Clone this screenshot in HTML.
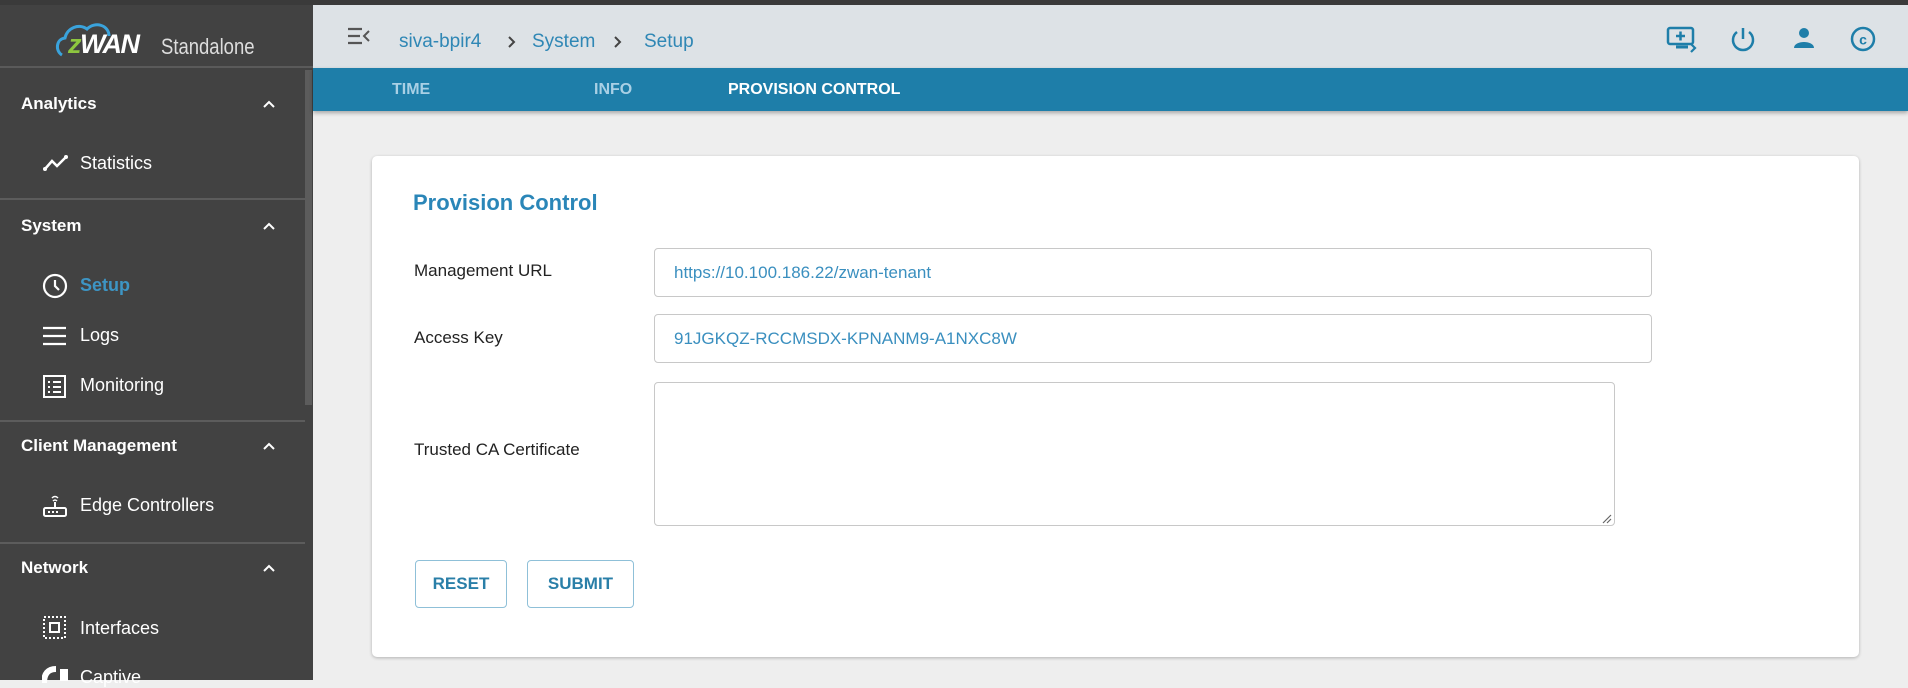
<!DOCTYPE html>
<html><head><meta charset="utf-8"><style>
*{box-sizing:border-box;margin:0;padding:0}
body{width:1908px;height:680px;overflow:hidden;background:#eeeeee;font-family:"Liberation Sans",sans-serif;position:relative}
.topbar{position:absolute;left:0;top:0;width:1908px;height:5px;background:#3a3a3a}
.side{position:absolute;left:0;top:5px;width:313px;height:675px;background:#424242;color:#fff}
.logo{height:63px;border-bottom:2px solid #5a5a5a;position:relative}
.scroll{position:absolute;left:305px;top:65px;width:7px;height:335px;background:#5c5c5c}
.sec{position:absolute;left:21px;font-weight:bold;font-size:17px;color:#fff}
.chev{position:absolute;left:262px;width:14px;height:14px}
.item{position:absolute;left:80px;font-size:18px;color:#fff}
.ico{position:absolute;left:42px}
.div{position:absolute;left:0;width:305px;height:2px;background:#5c5c5c}
.hdr{position:absolute;left:313px;top:5px;width:1595px;height:63px;background:#dde2e6}
.crumb{position:absolute;top:26px;font-size:19px;color:#2f87b5}
.sep{position:absolute;top:30px}
.tabs{position:absolute;left:313px;top:68px;width:1595px;height:43px;background:#1e7ea9;box-shadow:0 2px 4px rgba(0,0,0,.3)}
.tab{position:absolute;top:13px;font-size:16px;font-weight:bold;color:#a9d0e5}
.card{position:absolute;left:372px;top:156px;width:1487px;height:501px;background:#fff;border-radius:5px;box-shadow:0 1px 3px rgba(0,0,0,.25)}
.title{position:absolute;left:41px;top:34px;font-size:22px;font-weight:bold;color:#2a86b8}
.lbl{position:absolute;left:42px;font-size:17px;color:#222}
.inp{position:absolute;left:282px;width:998px;height:49px;border:1px solid #c8c8c8;border-radius:4px;font-size:17px;color:#3a8fbf;padding:14px 19px}
.btn{position:absolute;top:404px;height:48px;border:1px solid #8fc0d8;border-radius:4px;font-size:17px;font-weight:bold;color:#2a7fa8;text-align:center;line-height:46px}
</style></head><body>
<div class="topbar"></div>
<div class="side">
 <div class="logo">
  <svg style="position:absolute;left:55px;top:14px" width="60" height="40" viewBox="0 0 60 40"><path d="M7 36 C0 32 1 20 10 19 C12 9 24 4 32 10 C40 2 54 6 54 17" fill="none" stroke="#3aa3dc" stroke-width="3"/></svg>
  <div style="position:absolute;left:68px;top:24px;font-size:27px;font-weight:bold;font-style:italic;letter-spacing:-1.5px;color:#fff"><span style="color:#8dc63f">z</span>WAN</div>
  <div style="position:absolute;left:161px;top:29px;font-size:22px;color:#ddd;transform:scaleX(0.84);transform-origin:left">Standalone</div>
 </div>
 <div class="scroll"></div>
 <div class="sec" style="top:89px">Analytics</div>
 <svg class="chev" style="top:92px" viewBox="0 0 14 14"><path d="M2 10 L7 5 L12 10" fill="none" stroke="#fff" stroke-width="2"/></svg>
 <svg class="ico" style="top:146px" width="28" height="24" viewBox="0 0 28 24"><path d="M3 18 L10 10 L15 15 L24 6" fill="none" stroke="#fff" stroke-width="2.5"/><circle cx="3" cy="18" r="2" fill="#fff"/><circle cx="24" cy="6" r="2" fill="#fff"/></svg>
 <div class="item" style="top:148px">Statistics</div>
 <div class="div" style="top:193px"></div>
 <div class="sec" style="top:211px">System</div>
 <svg class="chev" style="top:214px" viewBox="0 0 14 14"><path d="M2 10 L7 5 L12 10" fill="none" stroke="#fff" stroke-width="2"/></svg>
 <svg class="ico" style="top:268px" width="26" height="26" viewBox="0 0 26 26"><circle cx="13" cy="13" r="11" fill="none" stroke="#fff" stroke-width="2.2"/><path d="M13 7 V13 L17 17" fill="none" stroke="#fff" stroke-width="2.2"/></svg>
 <div class="item" style="top:270px;color:#3d95c4;font-weight:bold">Setup</div>
 <svg class="ico" style="top:320px" width="26" height="22" viewBox="0 0 26 22"><path d="M1 3H24M1 11H24M1 19H24" stroke="#fff" stroke-width="2.2"/></svg>
 <div class="item" style="top:320px">Logs</div>
 <svg class="ico" style="top:369px" width="26" height="26" viewBox="0 0 26 26"><rect x="2" y="2" width="21" height="21" fill="none" stroke="#fff" stroke-width="2"/><path d="M6 8h2M11 8h8M6 13h2M11 13h8M6 18h2M11 18h8" stroke="#fff" stroke-width="2"/></svg>
 <div class="item" style="top:370px">Monitoring</div>
 <div class="div" style="top:415px"></div>
 <div class="sec" style="top:431px">Client Management</div>
 <svg class="chev" style="top:434px" viewBox="0 0 14 14"><path d="M2 10 L7 5 L12 10" fill="none" stroke="#fff" stroke-width="2"/></svg>
 <svg class="ico" style="top:488px" width="26" height="26" viewBox="0 0 26 26"><path d="M10 5 Q13 2 16 5 M11 8 Q13 6 15 8" fill="none" stroke="#fff" stroke-width="1.5"/><path d="M13 9V15" stroke="#fff" stroke-width="2"/><rect x="2" y="15" width="22" height="8" rx="1.5" fill="none" stroke="#fff" stroke-width="2"/><path d="M6 19h2M10 19h2M14 19h2" stroke="#fff" stroke-width="2"/></svg>
 <div class="item" style="top:490px">Edge Controllers</div>
 <div class="div" style="top:537px"></div>
 <div class="sec" style="top:553px">Network</div>
 <svg class="chev" style="top:556px" viewBox="0 0 14 14"><path d="M2 10 L7 5 L12 10" fill="none" stroke="#fff" stroke-width="2"/></svg>
 <svg class="ico" style="top:610px" width="26" height="26" viewBox="0 0 26 26"><rect x="2" y="2" width="21" height="21" fill="none" stroke="#fff" stroke-width="2" stroke-dasharray="2 2"/><rect x="8" y="8" width="9" height="9" fill="none" stroke="#fff" stroke-width="2"/></svg>
 <div class="item" style="top:613px">Interfaces</div>
 <svg class="ico" style="top:658px" width="30" height="20" viewBox="0 0 30 20"><path d="M2 20 Q2 6 14 6" fill="none" stroke="#fff" stroke-width="6"/><rect x="18" y="6" width="8" height="12" fill="#fff"/></svg>
 <div class="item" style="top:662px">Captive</div>
</div>
<div class="hdr">
 <svg style="position:absolute;left:34px;top:22px" width="24" height="18" viewBox="0 0 24 18"><path d="M1 2H15M1 9H13M1 16H15" stroke="#555" stroke-width="2.2"/><path d="M22 4 L17 9 L22 14" fill="none" stroke="#555" stroke-width="2"/></svg>
 <div class="crumb" style="left:86px">siva-bpir4</div>
 <svg class="sep" style="left:194px" width="10" height="14" viewBox="0 0 10 14"><path d="M2 2 L7 7 L2 12" fill="none" stroke="#444" stroke-width="2"/></svg>
 <div class="crumb" style="left:219px">System</div>
 <svg class="sep" style="left:300px" width="10" height="14" viewBox="0 0 10 14"><path d="M2 2 L7 7 L2 12" fill="none" stroke="#444" stroke-width="2"/></svg>
 <div class="crumb" style="left:331px">Setup</div>
 <svg style="position:absolute;left:1353px;top:20px" width="32" height="28" viewBox="0 0 32 28"><rect x="2" y="3" width="25" height="16" rx="2" fill="none" stroke="#1e7ea9" stroke-width="2.5"/><path d="M14.5 6.5V15.5M10 11H19" stroke="#1e7ea9" stroke-width="2.5"/><path d="M10 22H22" stroke="#1e7ea9" stroke-width="3"/><path d="M25 19 L29 23 L25 27" fill="none" stroke="#1e7ea9" stroke-width="2.2"/></svg>
 <svg style="position:absolute;left:1417px;top:20px" width="26" height="28" viewBox="0 0 26 28"><path d="M13 3V14" stroke="#1e7ea9" stroke-width="2.5"/><path d="M7 7 A10 10 0 1 0 19 7" fill="none" stroke="#1e7ea9" stroke-width="2.5"/></svg>
 <svg style="position:absolute;left:1479px;top:21px" width="24" height="24" viewBox="0 0 24 24"><circle cx="12" cy="7" r="5" fill="#1e7ea9"/><path d="M2 22 C2 14 22 14 22 22Z" fill="#1e7ea9"/></svg>
 <svg style="position:absolute;left:1537px;top:21px" width="28" height="28" viewBox="0 0 28 28"><circle cx="13" cy="13" r="11" fill="none" stroke="#1e7ea9" stroke-width="2.5"/><text x="13" y="18.5" text-anchor="middle" font-family="Liberation Sans" font-weight="bold" font-size="14" fill="#1e7ea9">c</text></svg>
</div>
<div class="tabs">
 <div class="tab" style="left:79px">TIME</div>
 <div class="tab" style="left:281px">INFO</div>
 <div class="tab" style="left:415px;color:#fff">PROVISION CONTROL</div>
</div>
<div class="card">
 <div class="title">Provision Control</div>
 <div class="lbl" style="top:105px">Management URL</div>
 <div class="inp" style="top:92px">https://10.100.186.22/zwan-tenant</div>
 <div class="lbl" style="top:172px">Access Key</div>
 <div class="inp" style="top:158px">91JGKQZ-RCCMSDX-KPNANM9-A1NXC8W</div>
 <div class="lbl" style="top:284px">Trusted CA Certificate</div>
 <div class="inp" style="top:226px;width:961px;height:144px"></div>
 <svg style="position:absolute;left:1230px;top:358px" width="10" height="10" viewBox="0 0 10 10"><path d="M1 9L9 1M5 9L9 5" stroke="#666" stroke-width="1.2"/></svg>
 <div class="btn" style="left:43px;width:92px">RESET</div>
 <div class="btn" style="left:155px;width:107px">SUBMIT</div>
</div>
</body></html>
